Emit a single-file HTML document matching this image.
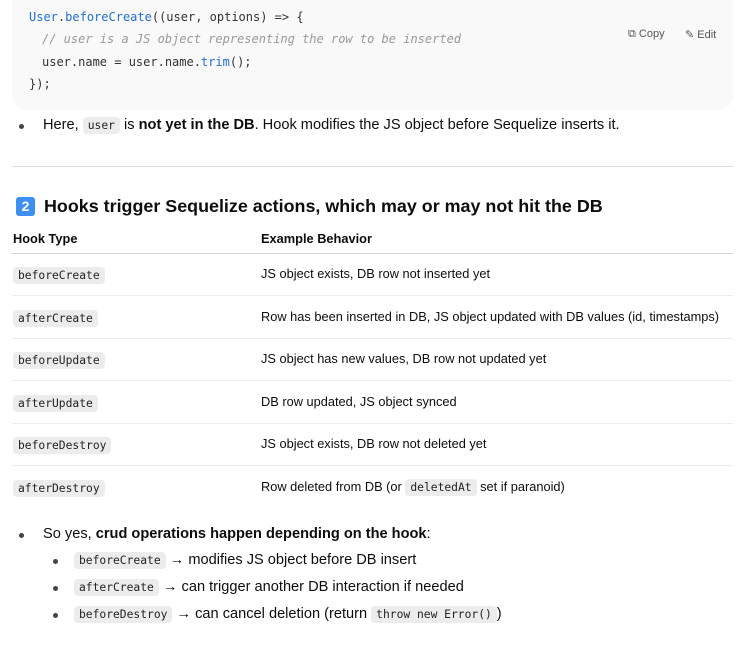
<!DOCTYPE html>
<html><head><style>
body{margin:0;width:750px;height:646px;background:#fff;font-family:"Liberation Sans",sans-serif;color:#0d0d0d;position:relative;overflow:hidden}
.abs{position:absolute;white-space:nowrap}
.code{position:absolute;left:12px;top:0;width:721px;height:110px;background:#f9f9f9;border-radius:0 0 14px 14px}
.mono{font-family:"DejaVu Sans Mono","Liberation Mono",monospace;font-size:12px;color:#333}
.kw{color:#1f6fd6}.cm{color:#999;font-style:italic}
code{font-family:"DejaVu Sans Mono","Liberation Mono",monospace;font-size:11.3px;background:#ececec;border-radius:4px;padding:2px 5px;color:#222}
.t{font-size:12.8px;color:#0d0d0d}
.line{position:absolute;left:12px;width:721px;height:1px;background:#ececec}
.dot{position:absolute;width:5px;height:5px;border-radius:50%;background:#444}
.li{font-size:14.6px}
</style></head><body>
<div class="code"></div>
<div class="abs mono" style="left:29px;top:10px"><span class="kw">User</span>.<span class="kw">beforeCreate</span>((user, options) =&gt; {</div>
<div class="abs mono cm" style="left:42px;top:32px">// user is a JS object representing the row to be inserted</div>
<div class="abs mono" style="left:42px;top:55px">user.name = user.name.<span class="kw">trim</span>();</div>
<div class="abs mono" style="left:29px;top:77px">});</div>
<div class="abs" style="left:628px;top:28px;font-size:11px;color:#555">⧉ Copy</div>
<div class="abs" style="left:685px;top:28px;font-size:11px;color:#555">✎ Edit</div>

<div class="dot" style="left:19px;top:124px"></div>
<div class="abs li" style="left:43px;top:117px">Here, <code>user</code> is <b>not yet in the DB</b>. Hook modifies the JS object before Sequelize inserts it.</div>
<div class="line" style="top:166px;background:#ddd"></div>

<div class="abs" style="left:16px;top:197px;width:19px;height:19px;background:#3d8ff0;border-radius:3px;color:#fff;font-weight:bold;font-size:14px;text-align:center;line-height:19px">2</div>
<div class="abs" style="left:44px;top:196px;font-size:17.9px;font-weight:bold">Hooks trigger Sequelize actions, which may or may not hit the DB</div>

<div class="abs t" style="left:13px;top:231px;font-weight:bold">Hook Type</div>
<div class="abs t" style="left:261px;top:231px;font-weight:bold">Example Behavior</div>
<div class="line" style="top:253px;background:#d5d5d5"></div>

<div class="abs" style="left:13px;top:266px"><code>beforeCreate</code></div>
<div class="abs t" style="left:261px;top:266px">JS object exists, DB row not inserted yet</div>
<div class="line" style="top:295px"></div>
<div class="abs" style="left:13px;top:309px"><code>afterCreate</code></div>
<div class="abs t" style="left:261px;top:309px">Row has been inserted in DB, JS object updated with DB values (id, timestamps)</div>
<div class="line" style="top:338px"></div>
<div class="abs" style="left:13px;top:351px"><code>beforeUpdate</code></div>
<div class="abs t" style="left:261px;top:351px">JS object has new values, DB row not updated yet</div>
<div class="line" style="top:380px"></div>
<div class="abs" style="left:13px;top:394px"><code>afterUpdate</code></div>
<div class="abs t" style="left:261px;top:394px">DB row updated, JS object synced</div>
<div class="line" style="top:423px"></div>
<div class="abs" style="left:13px;top:436px"><code>beforeDestroy</code></div>
<div class="abs t" style="left:261px;top:436px">JS object exists, DB row not deleted yet</div>
<div class="line" style="top:465px"></div>
<div class="abs" style="left:13px;top:479px"><code>afterDestroy</code></div>
<div class="abs t" style="left:261px;top:479px">Row deleted from DB (or <code>deletedAt</code> set if paranoid)</div>

<div class="dot" style="left:19px;top:533px"></div>
<div class="abs li" style="left:43px;top:526px">So yes, <b>crud operations happen depending on the hook</b>:</div>
<div class="dot" style="left:53px;top:559px"></div>
<div class="abs li" style="left:74px;top:552px"><code>beforeCreate</code> → modifies JS object before DB insert</div>
<div class="dot" style="left:53px;top:586px"></div>
<div class="abs li" style="left:74px;top:579px"><code>afterCreate</code> → can trigger another DB interaction if needed</div>
<div class="dot" style="left:53px;top:613px"></div>
<div class="abs li" style="left:74px;top:606px"><code>beforeDestroy</code> → can cancel deletion (return <code>throw new Error()</code>)</div>
</body></html>
